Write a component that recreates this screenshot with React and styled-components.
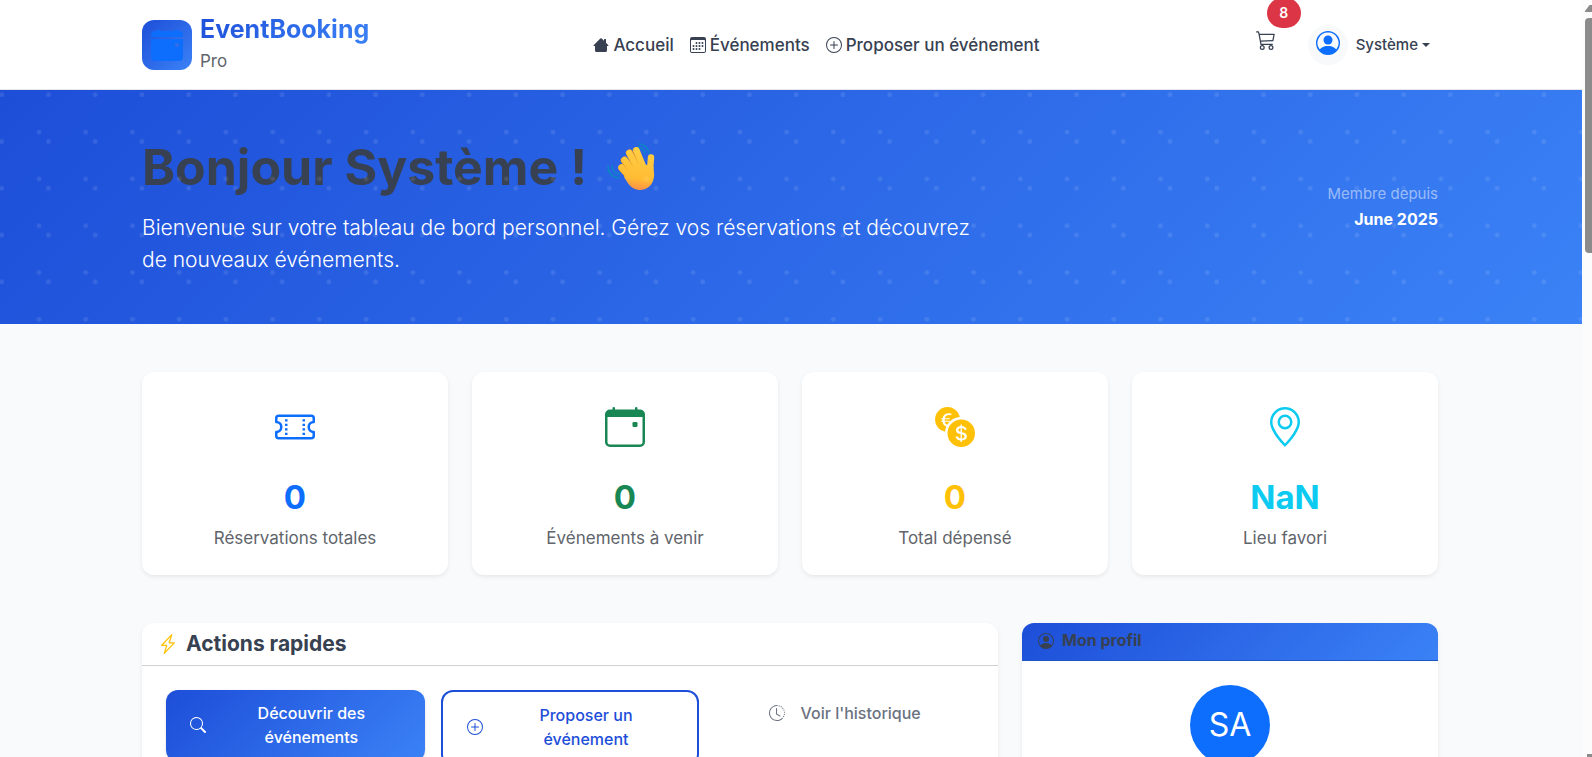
import React from "react";
import styled, { createGlobalStyle } from "styled-components";
import {
  BsCalendar3,
  BsCalendarEvent,
  BsCalendarEventFill,
  BsCart3,
  BsClockHistory,
  BsCurrencyExchange,
  BsGeoAlt,
  BsLightningCharge,
  BsPersonCircle,
  BsPlusCircle,
  BsSearch,
  BsTicketPerforated,
} from "react-icons/bs";

const gradient = "linear-gradient(135deg, #1d4ed8 0%, #3b82f6 100%)";

const GlobalStyle = createGlobalStyle`
  *, *::before, *::after { box-sizing: border-box; }
  body {
    margin: 0;
    background: #f8fafc;
    color: #374151;
    font-family: Inter, "Open Sans", sans-serif;
    font-size: 16px;
    line-height: 24px;
  }
  h1, h2, p { margin: 0; }
  a { color: inherit; text-decoration: none; }
  button { font: inherit; cursor: pointer; }
  svg { flex-shrink: 0; }
`;

const Shell = styled.div`
  display: flex;
  height: 100vh;
  overflow: hidden;
`;

const Page = styled.div`
  flex: 1;
  min-width: 0;
  overflow-y: auto;
  scrollbar-width: none;
`;

const ScrollRail = styled.div`
  display: flex;
  flex-direction: column;
  align-items: flex-end;
  width: 10px;
  padding-top: 5px;
  background: #fcfcfc;
  overflow: hidden;
`;

const RailArrow = styled.svg`
  display: block;
  width: 7px;
  height: 7px;
  fill: #8b8b8b;
`;

const RailThumb = styled.div`
  width: 7px;
  height: 235px;
  margin: 6px 0 auto;
  border-radius: 4px 0 0 4px;
  background: #8b8b8b;
`;

const RailEnd = styled.div`
  width: 5px;
  height: 3px;
  background: #8b8b8b;
`;

const Container = styled.div`
  width: 100%;
  max-width: 1320px;
  margin: 0 auto;
  padding: 0 13px 0 11px;
`;

const Header = styled.header`
  background: #fff;
  border-bottom: 1px solid #e5e7eb;
`;

const HeaderRow = styled(Container)`
  display: flex;
  align-items: center;
  justify-content: space-between;
  height: 89px;
`;

const Brand = styled.a`
  display: flex;
  align-items: center;
  gap: 8px;
`;

const BrandMark = styled.span`
  display: grid;
  place-items: center;
  width: 50px;
  height: 50px;
  border-radius: 12px;
  background: ${gradient};
  color: #0d6efd;
`;

const BrandText = styled.span`
  display: flex;
  flex-direction: column;
  padding-bottom: 4px;
`;

const BrandName = styled.span`
  font-size: 25px;
  font-weight: 700;
  line-height: 36px;
  background: ${gradient};
  background-clip: text;
  color: transparent;
`;

const BrandTag = styled.span`
  font-size: 17px;
  line-height: 28px;
  color: #5f656b;
`;

const Nav = styled.nav`
  display: flex;
  gap: 16px;
  padding-left: 8px;
`;

const NavLink = styled.a`
  display: flex;
  align-items: center;
  gap: 4px;
  font-size: 17px;
  font-weight: 500;
`;

const Account = styled.div`
  display: flex;
  align-items: center;
  gap: 32px;
`;

const CartButton = styled.button`
  position: relative;
  display: flex;
  padding: 0 0 10px;
  border: 0;
  background: none;
  color: #374151;
`;

const CartBadge = styled.span`
  position: absolute;
  left: 11px;
  bottom: 32px;
  width: 34px;
  border-radius: 16px;
  background: #dc3545;
  color: #fff;
  font-size: 14px;
  font-weight: 600;
  line-height: 30px;
  text-align: center;
`;

const UserButton = styled.button`
  display: flex;
  align-items: center;
  gap: 8px;
  padding: 0 8px 0 0;
  border: 0;
  background: none;
  color: #374151;
  font-size: 15px;
  font-weight: 500;
`;

const UserIcon = styled.span`
  display: grid;
  place-items: center;
  width: 40px;
  height: 40px;
  padding-bottom: 4px;
  border-radius: 50%;
  background: #f8f9fa;
  color: #0d6efd;
`;

const UserName = styled.span`
  display: flex;
  align-items: center;
  gap: 4px;
`;

const Caret = styled.span`
  border: 4px solid transparent;
  border-top-color: currentColor;
  border-bottom: 0;
`;

const Hero = styled.section`
  position: relative;
  padding: 48px 0;
  background: ${gradient};
`;

const HeroDots = styled.svg`
  position: absolute;
  inset: 0;
  width: 100%;
  height: 100%;
  pointer-events: none;
`;

const HeroRow = styled(Container)`
  display: flex;
  align-items: center;
  justify-content: space-between;
`;

const HeroCopy = styled.div`
  width: 66%;
`;

const HeroTitle = styled.h1`
  display: flex;
  align-items: center;
  gap: 20px;
  margin-bottom: 16px;
  font-size: 50px;
  font-weight: 700;
  line-height: 58px;
`;

const HeroLead = styled.p`
  font-size: 21px;
  font-weight: 300;
  line-height: 32px;
  color: #fff;
`;

const Member = styled.div`
  text-align: right;
  color: #fff;
`;

const MemberLabel = styled.p`
  font-size: 15px;
  color: rgba(255, 255, 255, 0.5);
`;

const MemberDate = styled.p`
  font-weight: 700;
  line-height: 26px;
`;

const Main = styled.main`
  padding: 48px 0;
`;

const Stats = styled.div`
  display: grid;
  grid-template-columns: repeat(4, 1fr);
  gap: 24px;
  margin-bottom: 48px;
`;

const Card = styled.section`
  border-radius: 12px;
  background: #fff;
  box-shadow: 0 2px 4px rgba(0, 0, 0, 0.075);
  overflow: hidden;
`;

const StatCard = styled(Card)`
  display: flex;
  flex-direction: column;
  align-items: center;
  padding: 35px 24px 24px;
  color: ${(p) => p.$color};
`;

const StatValue = styled.p`
  margin-top: 28px;
  font-size: 33px;
  font-weight: 700;
  line-height: 44px;
`;

const StatLabel = styled.p`
  margin-top: 6px;
  font-size: 17px;
  line-height: 26px;
  color: #5f656b;
`;

const Columns = styled.div`
  display: grid;
  grid-template-columns: 856fr 416fr;
  gap: 24px;
  align-items: start;
`;

const CardHeader = styled.div`
  display: flex;
  align-items: center;
  gap: 8px;
  padding: 8px 16px;
  border-bottom: 1px solid #cfd0d1;
  svg { color: #ffc107; }
`;

const ProfileHeader = styled(CardHeader)`
  padding: 6px 16px 8px;
  background: ${gradient};
  border-bottom-color: #1e56c4;
  svg { color: inherit; }
`;

const CardTitle = styled.h2`
  font-size: ${(p) => (p.$small ? 16 : 21)}px;
  font-weight: 700;
  line-height: ${(p) => (p.$small ? 23 : 26)}px;
`;

const Actions = styled.div`
  display: grid;
  grid-template-columns: repeat(3, 1fr);
  gap: 16px;
  align-items: start;
  padding: 24px;
`;

const ActionButton = styled.button`
  display: flex;
  align-items: center;
  justify-content: center;
  gap: 16px;
  padding: 11px 24px 13px;
  border: 0;
  border-radius: 12px;
  background: none;
  color: #6b7280;
  font-weight: 500;
`;

const PrimaryAction = styled(ActionButton)`
  background: ${gradient};
  box-shadow: 0 1px 3px rgba(0, 0, 0, 0.15);
  color: #fff;
`;

const OutlineAction = styled(ActionButton)`
  border: 2px solid #1d4ed8;
  color: #1d4ed8;
`;

const ActionText = styled.span`
  flex: ${(p) => (p.$fill ? 1 : "none")};
`;

const ProfileBody = styled.div`
  display: flex;
  justify-content: center;
  padding: 24px;
`;

const Avatar = styled.div`
  width: 80px;
  border-radius: 50%;
  background: #0d6efd;
  color: #fff;
  font-size: 32px;
  line-height: 80px;
  text-align: center;
`;

const stats = [
  { label: "Réservations totales", value: "0", color: "#0d6efd", Icon: BsTicketPerforated },
  { label: "Événements à venir", value: "0", color: "#198754", Icon: BsCalendarEvent },
  { label: "Total dépensé", value: "0", color: "#ffc107", Icon: BsCurrencyExchange },
  { label: "Lieu favori", value: "NaN", color: "#0dcaf0", Icon: BsGeoAlt },
];

function HouseIcon() {
  return (
    <svg width="16" height="16" viewBox="0 0 16 16" fill="currentColor" aria-hidden="true">
      <path d="M7.293 1.500a1 1 0 0 1 1.414 0L11 3.793V2.500a.5.5 0 0 1 .5-.5h1a.5.5 0 0 1 .5.5v3.293l2.354 2.353a.5.5 0 0 1-.354.854H14v4.500a1.500 1.500 0 0 1-1.500 1.500h-9A1.500 1.500 0 0 1 2 13.500V9H1a.5.5 0 0 1-.354-.854z" />
    </svg>
  );
}

function WavingHand() {
  return (
    <svg width="48" height="48" viewBox="1 2 48 48" role="img" aria-label="Main qui salue">
      <defs>
        <linearGradient id="hand" gradientUnits="userSpaceOnUse" x1="34" y1="8" x2="28" y2="50">
          <stop offset="0" stopColor="#ffce44" />
          <stop offset="0.7" stopColor="#ffbc33" />
          <stop offset="1" stopColor="#f98a4d" />
        </linearGradient>
      </defs>
      <g fill="none" stroke="#0b86c4" strokeWidth="1.5" strokeLinecap="round">
        <path d="M33 3c5 0 9 4 10 9M31.500 6c4 .5 6.500 3 7.500 6.500M2 25c0 7 4 11 11 12M6 25c0 4 3 7 7.500 8" />
      </g>
      <g fill="none" stroke="#e58f2c" strokeWidth="7.4" strokeLinecap="round">
        <path d="M16 27l9 10M18.500 19.500l10 13" />
      </g>
      <g fill="none" stroke="url(#hand)" strokeWidth="6.4" strokeLinecap="round">
        <path d="M15.500 26.500l9 10" />
        <path d="M18.500 19l10 13" />
        <path d="M30 9.500l7 17" stroke="#e99a2c" />
        <path d="M23.500 12l9 17" stroke="#e99a2c" strokeWidth="7.2" />
        <path d="M30.400 9.300l7 17" />
        <path d="M23.300 12l9 17" strokeWidth="6" />
        <path d="M45 16.500L44 30" />
      </g>
      <path
        fill="url(#hand)"
        d="M24 26l13-4c2 2 4 3 5.500 1l5 3c0 3 .8 6 .6 9C47.500 43.500 41.500 49 34 49c-5 0-8.500-2.500-11.500-6L18 36z"
      />
    </svg>
  );
}

export default function App() {
  return (
    <>
      <GlobalStyle />
      <Shell>
        <Page>
          <Header>
            <HeaderRow>
              <Brand href="#">
                <BrandMark>
                  <BsCalendarEventFill size={32} />
                </BrandMark>
                <BrandText>
                  <BrandName>EventBooking</BrandName>
                  <BrandTag>Pro</BrandTag>
                </BrandText>
              </Brand>
              <Nav>
                <NavLink href="#accueil">
                  <HouseIcon />
                  Accueil
                </NavLink>
                <NavLink href="#evenements">
                  <BsCalendar3 size={16} />
                  Événements
                </NavLink>
                <NavLink href="#proposer">
                  <BsPlusCircle size={16} />
                  Proposer un événement
                </NavLink>
              </Nav>
              <Account>
                <CartButton type="button" aria-label="Panier">
                  <BsCart3 size={20} />
                  <CartBadge>8</CartBadge>
                </CartButton>
                <UserButton type="button">
                  <UserIcon>
                    <BsPersonCircle size={24} />
                  </UserIcon>
                  <UserName>
                    Système
                    <Caret />
                  </UserName>
                </UserButton>
              </Account>
            </HeaderRow>
          </Header>

          <Hero>
            <HeroRow>
              <HeroCopy>
                <HeroTitle>
                  Bonjour Système ! <WavingHand />
                </HeroTitle>
                <HeroLead>
                  Bienvenue sur votre tableau de bord personnel. Gérez vos réservations et découvrez
                  de nouveaux événements.
                </HeroLead>
              </HeroCopy>
              <Member>
                <MemberLabel>Membre depuis</MemberLabel>
                <MemberDate>June 2025</MemberDate>
              </Member>
            </HeroRow>
            <HeroDots aria-hidden="true">
              <defs>
                <pattern id="dots" width="46.73" height="46.8" patternUnits="userSpaceOnUse">
                  <g fill="#fff" fillOpacity="0.1">
                    <circle cx="1.8" cy="4.7" r="2.34" />
                    <circle cx="48.53" cy="4.7" r="2.34" />
                    <circle cx="39" cy="42.1" r="2.34" />
                  </g>
                </pattern>
              </defs>
              <rect width="100%" height="100%" fill="url(#dots)" />
            </HeroDots>
          </Hero>

          <Main>
            <Container>
              <Stats>
                {stats.map(({ label, value, color, Icon }) => (
                  <StatCard key={label} $color={color}>
                    <Icon size={40} />
                    <StatValue>{value}</StatValue>
                    <StatLabel>{label}</StatLabel>
                  </StatCard>
                ))}
              </Stats>
              <Columns>
                <Card>
                  <CardHeader>
                    <BsLightningCharge size={20} />
                    <CardTitle>Actions rapides</CardTitle>
                  </CardHeader>
                  <Actions>
                    <PrimaryAction type="button">
                      <BsSearch size={16} />
                      <ActionText $fill>Découvrir des événements</ActionText>
                    </PrimaryAction>
                    <OutlineAction type="button">
                      <BsPlusCircle size={16} />
                      <ActionText $fill>Proposer un événement</ActionText>
                    </OutlineAction>
                    <ActionButton type="button">
                      <BsClockHistory size={16} />
                      <ActionText>Voir l'historique</ActionText>
                    </ActionButton>
                  </Actions>
                </Card>
                <Card>
                  <ProfileHeader>
                    <BsPersonCircle size={16} />
                    <CardTitle $small>Mon profil</CardTitle>
                  </ProfileHeader>
                  <ProfileBody>
                    <Avatar>SA</Avatar>
                  </ProfileBody>
                </Card>
              </Columns>
            </Container>
          </Main>
        </Page>
        <ScrollRail aria-hidden="true">
          <RailArrow viewBox="0 0 7 7">
            <path d="M0 7V6L4.500 0H7V7z" />
          </RailArrow>
          <RailThumb />
          <RailEnd />
        </ScrollRail>
      </Shell>
    </>
  );
}
